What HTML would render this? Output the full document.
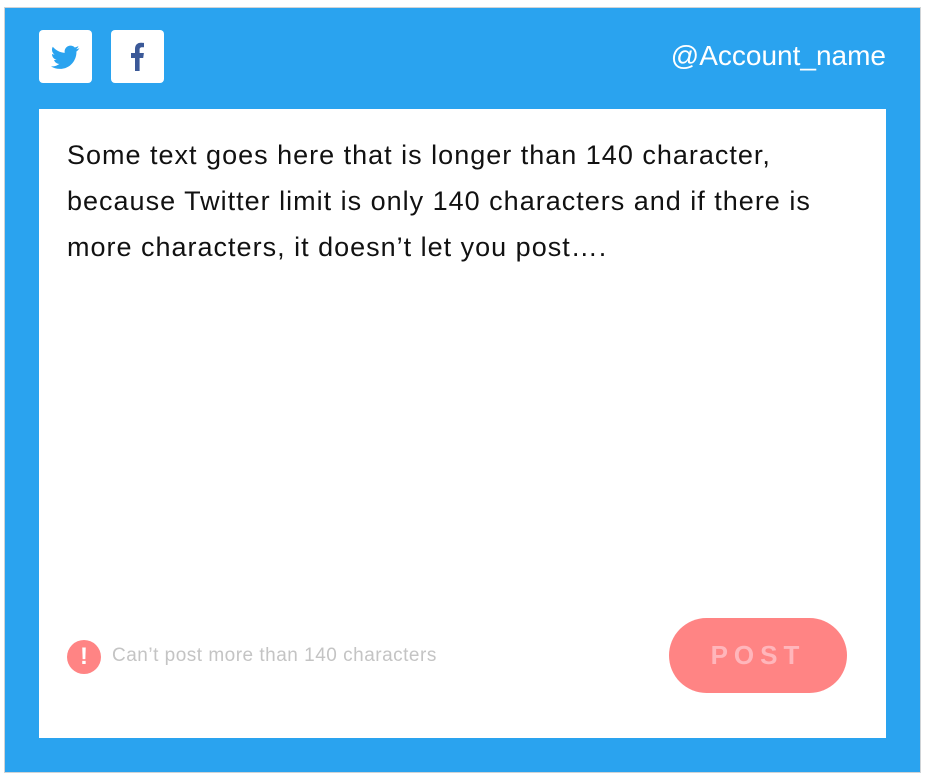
<!DOCTYPE html>
<html><head><style>
html,body{margin:0;padding:0;background:#fff;width:928px;height:780px;overflow:hidden;font-family:"Liberation Sans",sans-serif}
.outer{position:absolute;left:5px;top:8px;width:915px;height:764px;background:#2aa3ef;box-shadow:0 0 0 1px #cfd3d6}
.ic{position:absolute;top:30px;width:53px;height:53px;background:#fff;border-radius:4px}
.acct{position:absolute;right:42px;top:40px;color:#fff;font-size:28px}
.panel{position:absolute;left:39px;top:109px;width:847px;height:629px;background:#fff}
.txt{position:absolute;left:67px;top:132px;width:800px;font-size:27px;letter-spacing:1px;line-height:46px;color:#111;white-space:nowrap}
.warn{position:absolute;left:67px;top:640px;width:34px;height:34px;border-radius:50%;background:#ff8484;color:#fff;font-weight:bold;font-size:24px;text-align:center;line-height:34px}
.wt{position:absolute;left:112px;top:645px;font-size:19px;letter-spacing:.5px;color:#c4c4c4}
.post{position:absolute;left:669px;top:618px;width:178px;height:75px;border-radius:38px;background:#ff8484;color:#ffb6bb;font-weight:bold;font-size:26px;letter-spacing:6px;text-align:center;line-height:75px}
</style></head><body>
<div class="outer"></div>
<div class="ic" style="left:39px"><svg width="53" height="53" viewBox="0 0 24 24"><g transform="translate(5.5,5.8) scale(0.54)"><path fill="#2aa3ef" d="M23.6 4.6c-.9.4-1.8.6-2.8.8 1-.6 1.8-1.6 2.1-2.7-.9.6-2 1-3.1 1.2-.9-1-2.2-1.5-3.6-1.5-2.700 0-4.9 2.2-4.9 4.9 0 .4 0 .8.1 1.1C7.4 8.200 3.800 6.300 1.400 3.300c-.4.7-.7 1.6-.7 2.500 0 1.700.9 3.200 2.200 4.100-.8 0-1.600-.2-2.200-.6v.1c0 2.400 1.700 4.400 3.900 4.800-.4.1-.8.2-1.300.2-.3 0-.6 0-.9-.1.6 2 2.400 3.400 4.600 3.400-1.700 1.300-3.800 2.100-6.100 2.100-.4 0-.8 0-1.200-.1 2.200 1.400 4.800 2.200 7.500 2.200 9.100 0 14-7.500 14-14v-.6c1-.7 1.800-1.600 2.400-2.500z"/></g></svg></div>
<div class="ic" style="left:111px"><svg width="53" height="53" viewBox="0 0 53 53"><path fill="#3b5998" d="M24 41V28h-4v-5h4v-4c0-4 2.3-6.3 5.8-6.3 1.7 0 3.2.2 3.2.2v4.4h-2c-1.8 0-2.4 1.1-2.4 2.3V23h4.3l-.7 5h-3.6v13z"/></svg></div>
<div class="acct">@Account_name</div>
<div class="panel"></div>
<div class="txt">Some text goes here that is longer than 140 character,<br>because Twitter limit is only 140 characters and if there is<br>more characters, it doesn’t let you post….</div>
<div class="warn">!</div>
<div class="wt">Can’t post more than 140 characters</div>
<div class="post">POST</div>
</body></html>
